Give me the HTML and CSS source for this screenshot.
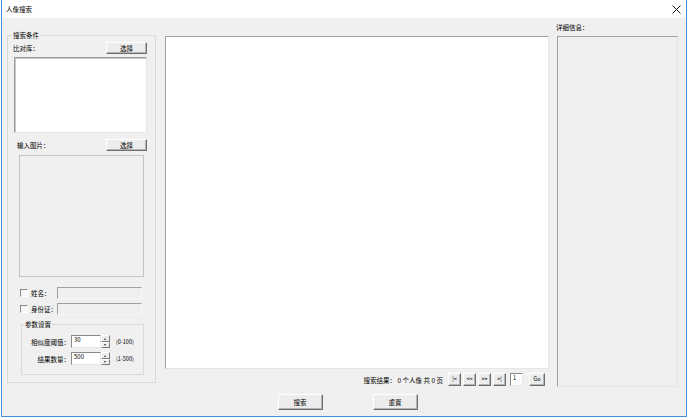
FILE: index.html
```html
<!DOCTYPE html>
<html lang="zh-CN">
<head>
    <meta charset="UTF-8">
    <title>人像搜索</title>
    <link rel="stylesheet" href="styles.css">
</head>
<body>
<div class="window">
    <div class="titlebar">
        <span class="title">人像搜索</span>
        <svg class="close" width="9" height="9" viewBox="0 0 9 9">
            <path d="M0.5 0.5 L8.5 8.5 M8.5 0.5 L0.5 8.5" stroke="#111" stroke-width="1" fill="none"/>
        </svg>
    </div>

    <div class="client">
        <div class="main">
            <fieldset class="group search-group">
                <legend>搜索条件</legend>
                <div class="row">
                    <span>比对库：</span>
                    <button class="btn btn-pick">选择</button>
                </div>
                <div class="listbox"></div>
                <div class="row row-indent">
                    <span>输入图片：</span>
                    <button class="btn btn-pick">选择</button>
                </div>
                <div class="picture"></div>
                <div class="check-row">
                    <span class="checkbox"></span>
                    <span class="check-label">姓名：</span>
                    <span class="field"></span>
                </div>
                <div class="check-row check-row-2">
                    <span class="checkbox"></span>
                    <span class="check-label">身份证：</span>
                    <span class="field"></span>
                </div>
                <fieldset class="group param-group">
                    <legend>参数设置</legend>
                    <div class="spin-row">
                        <span class="spin-label">相似度阈值：</span>
                        <span class="spin-value">30</span>
                        <span class="spin-btns"><span class="up"></span><span class="down"></span></span>
                        <span class="range">(0-100)</span>
                    </div>
                    <div class="spin-row spin-row-2">
                        <span class="spin-label">结果数量：</span>
                        <span class="spin-value">500</span>
                        <span class="spin-btns"><span class="up"></span><span class="down"></span></span>
                        <span class="range">(1-500)</span>
                    </div>
                </fieldset>
            </fieldset>

            <div class="center">
                <div class="results"></div>
                <div class="pager">
                    <span class="pager-text">搜索结果： 0 个人像 共 0 页</span>
                    <button class="btn btn-page">|&lt;</button>
                    <button class="btn btn-page">&lt;&lt;</button>
                    <button class="btn btn-page">&gt;&gt;</button>
                    <button class="btn btn-page btn-last">&gt;|</button>
                    <span class="page-input">1</span>
                    <button class="btn btn-go">Go</button>
                </div>
            </div>

            <div class="details">
                <div class="details-label">详细信息：</div>
                <div class="details-box"></div>
            </div>
        </div>

        <div class="actions">
            <button class="btn btn-action">搜索</button>
            <button class="btn btn-action">重置</button>
        </div>
    </div>
</div>
</body>
</html>
```

FILE: styles.css
```css
body {
    margin: 0;
    background: #fff;
    font-family: "Noto Sans CJK SC", "Noto Sans", sans-serif;
    font-size: 6.5px;
    color: #000;
}
.window {
    width: 684px;
    height: 416px;
    margin-left: 1px;
    border: 1px solid #3f8fdc;
    border-top: none;
    display: flex;
    flex-direction: column;
}
.titlebar {
    height: 18px;
    flex: none;
    background: #fff;
    display: flex;
    align-items: center;
    justify-content: space-between;
    padding: 0 5px 0 4px;
    font-size: 6.5px;
}
.close { display: block; }
.client {
    flex: 1;
    background: #f0f0f0;
}
.main {
    height: 370px;
    display: flex;
    align-items: flex-start;
}

/* group boxes */
.group {
    box-sizing: border-box;
    border: 1px solid #d9d9d9;
    margin: 0;
    min-width: 0;
}
.group legend {
    padding: 0 1px;
    margin-left: -1px;
    line-height: 11px;
    font-size: 6.5px;
}
.search-group {
    width: 149px;
    height: 353px;
    margin: 12px 0 0 5px;
    padding: 0 8px 0 5px;
}
.row {
    display: flex;
    align-items: center;
    justify-content: space-between;
    height: 12px;
    margin-top: 1px;
}
.row-indent {
    margin-top: 6px;
    padding-left: 4px;
}
.btn {
    font-family: inherit;
    font-size: 6.5px;
    padding: 0;
    margin: 0;
    background: #ececec;
    border: 1px solid;
    border-color: #fff #6e6e6e #6e6e6e #fff;
    box-shadow: inset -1px -1px #b4b4b4;
    color: #000;
    line-height: 1;
}
.btn-pick {
    width: 41px;
    height: 12px;
}
.listbox {
    width: 133px;
    height: 76px;
    box-sizing: border-box;
    margin: 3px 0 0 1px;
    background: #fff;
    border: 1px solid;
    border-color: #9a9a9a #e6e6e6 #e6e6e6 #9a9a9a;
    box-shadow: inset 1px 1px #c8c8c8;
}
.picture {
    width: 125px;
    height: 122px;
    box-sizing: border-box;
    margin: 4px 0 0 6px;
    border: 1px solid #c4c4c4;
    background: #f0f0f0;
}
.check-row {
    display: flex;
    align-items: center;
    height: 12px;
    margin-top: 10px;
    padding-left: 7px;
}
.check-row-2 { margin-top: 4px; }
.checkbox {
    width: 6px;
    height: 6px;
    border: 1px solid;
    border-color: #8a8a8a #fff #fff #8a8a8a;
    background: #f7f7f7;
}
.check-label {
    margin-left: 3px;
    width: 26px;
}
.field {
    width: 85px;
    height: 12px;
    box-sizing: border-box;
    border: 1px solid;
    border-color: #a0a0a0 #f7f7f7 #f7f7f7 #a0a0a0;
    background: #f0f0f0;
}

/* parameter box */
.param-group {
    width: 123px;
    height: 56px;
    margin: 4px 0 0 8px;
    padding: 0 0 0 3px;
}
.spin-row {
    display: flex;
    align-items: center;
    height: 13px;
    margin-top: 5px;
}
.spin-row-2 { margin-top: 4px; }
.spin-label {
    width: 45px;
    text-align: right;
}
.spin-value {
    width: 30px;
    height: 13px;
    box-sizing: border-box;
    margin-left: 1px;
    padding-left: 2px;
    background: #fff;
    border: 1px solid;
    border-color: #8a8a8a #e6e6e6 #e6e6e6 #8a8a8a;
    font-size: 6px;
    line-height: 8px;
}
.spin-btns {
    width: 9px;
    height: 13px;
    display: flex;
    flex-direction: column;
}
.spin-btns span {
    flex: 1;
    box-sizing: border-box;
    background: #ececec;
    border: 1px solid;
    border-color: #fff #7a7a7a #7a7a7a #fff;
    position: relative;
}
.spin-btns .up::after,
.spin-btns .down::after {
    content: "";
    position: absolute;
    left: 2px;
    top: 2px;
    border-left: 1.5px solid transparent;
    border-right: 1.5px solid transparent;
}
.spin-btns .up::after { border-bottom: 2px solid #333; }
.spin-btns .down::after { border-top: 2px solid #333; top: 1px; }
.range {
    margin-left: 6px;
    font-size: 5.5px;
}

/* center results */
.center {
    width: 384px;
    margin: 18px 0 0 9px;
}
.results {
    height: 333px;
    box-sizing: border-box;
    background: #fff;
    border: 1px solid;
    border-color: #a0a0a0 #e6e6e6 #e6e6e6 #a0a0a0;
}
.pager {
    display: flex;
    align-items: center;
    justify-content: flex-end;
    height: 13px;
    margin-top: 4px;
    padding-right: 4px;
}
.pager-text { margin-right: 5px; }
.btn-page {
    width: 13px;
    height: 13px;
    margin-right: 2px;
    font-size: 5.5px;
}
.btn-last { margin-right: 4px; }
.page-input {
    width: 13px;
    height: 13px;
    box-sizing: border-box;
    padding-left: 2px;
    background: #fff;
    border: 1px solid;
    border-color: #8a8a8a #e6e6e6 #e6e6e6 #8a8a8a;
    font-size: 5.5px;
    line-height: 9px;
    margin-right: 6px;
}
.btn-go {
    width: 16px;
    height: 13px;
    font-size: 5.5px;
}

/* details */
.details {
    width: 121px;
    margin: 4px 0 0 8px;
}
.details-label {
    line-height: 11px;
    margin-left: -1px;
}
.details-box {
    height: 351px;
    margin-top: 3px;
    box-sizing: border-box;
    border: 1px solid;
    border-color: #a0a0a0 #e6e6e6 #e6e6e6 #a0a0a0;
    background: #f0f0f0;
}

/* bottom buttons */
.actions {
    display: flex;
    justify-content: center;
    gap: 50px;
    margin-top: 6px;
    padding-left: 7px;
}
.btn-action {
    width: 45px;
    height: 16px;
}
```
